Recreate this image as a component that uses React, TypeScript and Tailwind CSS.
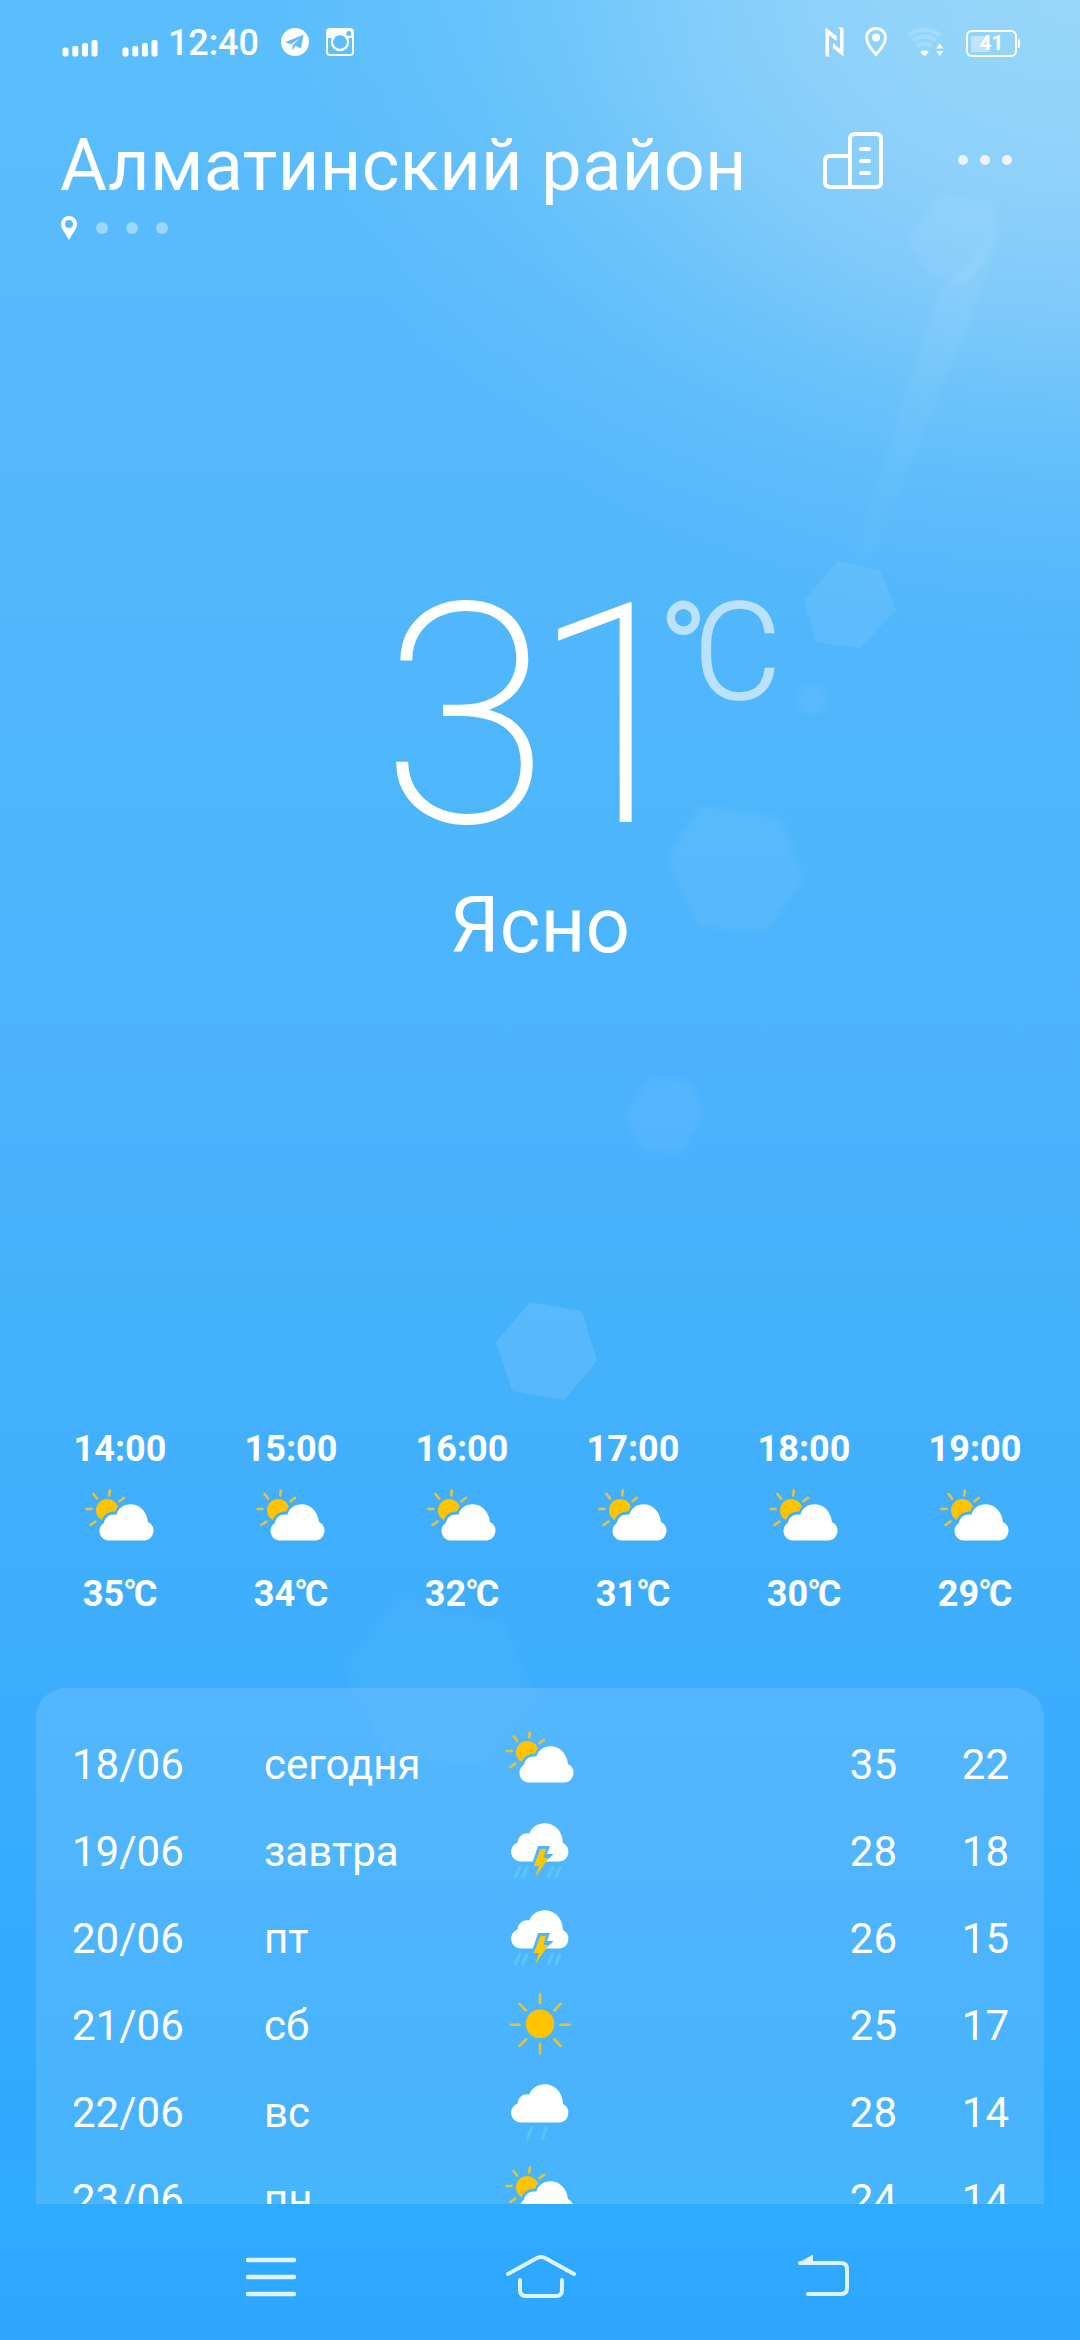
import React from "react";

function PartlyCloudy({ className }: { className: string }) {
  return (
    <svg viewBox="0 0 70 52" className={className} fill="none">
      <g stroke="#e8c234" strokeWidth="2.6" strokeLinecap="round">
        <path d="M1.5 20 H6.5M8.5 5 L12 9.5M24.8 1.5 L24.2 6.5M39 8.8 L34.5 12.2M5.5 36 L10.5 32.5" />
      </g>
      <path
        d="M16.5 31 A11.3 11.3 0 1 1 33 17.8 Q31 19.5 30.5 22.2 Q20 22.5 16.5 31Z"
        fill="#ffc300"
      />
      <path
        d="M23 51.5 A9.6 9.6 0 0 1 18.8 34 C20 27.5 25 24.5 31.5 25.6 C34.5 11.5 60 10 63 33 A9.8 9.8 0 0 1 60 51.5Z"
        fill="#fff"
      />
    </svg>
  );
}

function Cloud() {
  return (
    <path
      d="M16 47 A9.8 9.8 0 0 1 12.5 28 C13.500 21.500 18 18 24.400 19 C29 4 57 4 58 28.500 A9.800 9.800 0 0 1 54.500 47Z"
      fill="#fff"
    />
  );
}

function Storm({ className }: { className: string }) {
  return (
    <svg viewBox="0 1.5 70 70" className={className} fill="none">
      <Cloud />
      <path
        d="M10.500 62 l4 -9 M18 62 l4 -9 M43.500 62 l4 -9 M51 62 l4 -9"
        stroke="#5ac8fa"
        strokeOpacity="0.800"
        strokeWidth="3.400"
        strokeLinecap="round"
      />
      <path d="M33 31.500 H45 L42 39.500 H48.500 L40 48 H27.500Z" fill="#50b5fb" />
      <path d="M35.500 34.500 H41 L38.500 43.500 H43.500 L30 63 L34 51.500 H28.800Z" fill="#fdc900" />
    </svg>
  );
}

function Rain({ className }: { className: string }) {
  return (
    <svg viewBox="0 1.5 70 70" className={className} fill="none">
      <Cloud />
      <path
        d="M22.500 63 l4 -10.500 M37.500 63 l4 -10.500"
        stroke="#5ac8fa"
        strokeOpacity="0.800"
        strokeWidth="3.400"
        strokeLinecap="round"
      />
    </svg>
  );
}

function Sun({ className }: { className: string }) {
  return (
    <svg viewBox="0 1.2 70 70" className={className} fill="none">
      <circle cx="35" cy="35" r="14.300" fill="#ffc300" />
      <path
        d="M35 5.500 V14.500 M35 55 V64.500 M6 36 H14.500 M55.500 36 H64.500 M14.500 15 L21 21.500 M55.500 15 L49.500 21.500 M14.500 57 L21 50.500 M55.500 57 L49.500 50.500"
        stroke="#ebc033"
        strokeWidth="2.600"
        strokeLinecap="round"
      />
    </svg>
  );
}

function Signal() {
  return (
    <svg viewBox="0 0 36 17" className="h-[17px] w-[36px]" fill="#fff">
      <rect x="0.500" y="7.500" width="6" height="9" rx="2" />
      <rect x="10.300" y="6" width="6" height="10.500" rx="2" />
      <rect x="20" y="3" width="6" height="13.500" rx="2" />
      <rect x="29.500" y="0" width="6" height="16.500" rx="2" />
    </svg>
  );
}

function StatusBar() {
  return (
    <div className="flex h-[86px] items-start pl-[62px] pr-[60px]">
      <div className="mt-[40px] flex gap-[24px]">
        <Signal />
        <Signal />
      </div>
      <span className="ml-[10px] mt-[22px] text-[36px] font-medium leading-[42px] tracking-[-0.1px]">12:40</span>
      <svg viewBox="0 0 28 28" className="ml-[22px] mt-[28px] size-[28px]">
        <circle cx="14" cy="14" r="14" fill="#fff" />
        <path d="M4 14.300 L22.500 6.800 L20 20.500 L14.500 17.800 L11.800 21.300 L10.200 16.300Z" fill="#5dbcfb" />
        <path d="M20.500 8.800 L10.200 16.300 L11.500 21 L12.600 17.300Z" fill="#fff" />
        <path d="M20.500 8.800 L12.300 17 L11.800 21.300" fill="none" stroke="#5dbcfb" strokeWidth="1" />
      </svg>
      <svg viewBox="0 0 28 28" className="ml-[17px] mt-[28px] size-[28px]" fill="none">
        <rect x="1" y="1" width="26" height="26" rx="3" stroke="#fff" strokeWidth="2" />
        <path d="M1 2 H27 V10 H22 A9.200 9.200 0 0 0 6 10 H1Z" fill="#fff" />
        <circle cx="14" cy="14" r="8" stroke="#fff" strokeWidth="2.400" />
        <circle cx="14" cy="14" r="6.500" fill="#5dbcfb" />
        <rect x="20.500" y="3.300" width="4.500" height="4.500" rx="0.800" fill="#5dbcfb" />
      </svg>
      <div className="ml-auto flex">
        <svg viewBox="0 0 19 30" className="mt-[27px] h-[30px] w-[19px]" fill="#fff">
          <path d="M0.500 0.500 L11.500 9 V14 L4 8 V27 Q4 29.500 6 29.500 H1.500 Q0.500 29 0.500 27Z" />
          <path d="M18.500 29.500 L8 21 V16 L15 22 V3 Q15 0.500 13 0.500 H17.500 Q18.500 1 18.500 3Z" />
        </svg>
        <svg viewBox="0 0 22 30" className="ml-[21px] mt-[27px] h-[30px] w-[22px]">
          <path
            d="M11 1.500 C5.500 1.500 1.500 5.500 1.500 10.700 C1.500 17 7.500 23.500 11 27.500 C14.500 23.500 20.500 17 20.500 10.700 C20.500 5.500 16.500 1.500 11 1.500Z"
            fill="none"
            stroke="#fff"
            strokeWidth="2.800"
          />
          <circle cx="11" cy="10.500" r="4" fill="#fff" />
        </svg>
        <svg viewBox="0 0 36 30" className="ml-[21px] mt-[27px] h-[30px] w-[36px]" fill="none">
          <g stroke="#fff" strokeOpacity="0.170" strokeWidth="4.400">
            <path d="M1 8.500 C9 1 24 1 32 8.500" />
            <path d="M5.500 14 C11 8 22 8 27.500 14" />
            <path d="M9.500 19.500 C13 15.500 20 15.500 23.500 19.500" />
          </g>
          <path d="M12.200 25 Q16.500 21.500 20.800 25 L17.500 28.500 Q16.500 29 15.500 28.500Z" fill="#fff" />
          <path d="M28.200 21.500 L31.700 16.500 L35.200 21.500Z M28.200 24 H35.200 L31.700 29Z" fill="#fff" />
        </svg>
        <div className="ml-[22px] mt-[30px] flex items-center">
          <div className="relative flex h-[27px] w-[51px] items-center justify-center rounded-[6px] border-2 border-white">
            <div className="absolute left-[3px] top-[4px] h-[16px] w-[17px] bg-white/40" />
            <span className="relative text-[21px] font-bold leading-none">41</span>
          </div>
          <div className="ml-px h-[9px] w-[2px] rounded-r bg-white" />
        </div>
      </div>
    </div>
  );
}

function Header() {
  return (
    <div className="flex h-[164px] items-start pl-[60px] pr-[68px]">
      <div>
        <h1 className="mt-[38px] whitespace-nowrap text-[72px] font-normal leading-[84px] tracking-[0.4px]">Алматинский район</h1>
        <div className="mt-[8px] flex items-center">
          <svg viewBox="0 0 18 24" className="h-[24px] w-[18px]">
            <path
              d="M9 0 A8 8 0 0 0 1 8 C1 13 6 18 9 24 C12 18 17 13 17 8 A8 8 0 0 0 9 0Z M9 4 a4 4 0 1 1 0 8 a4 4 0 1 1 0 -8Z"
              fill="#fff"
              fillRule="evenodd"
            />
          </svg>
          <div className="ml-[18px] flex gap-[18px]">
            <i className="size-[12px] rounded-full bg-white/40" />
            <i className="size-[12px] rounded-full bg-white/40" />
            <i className="size-[12px] rounded-full bg-white/40" />
          </div>
        </div>
      </div>
      <div className="ml-auto mt-[46px] flex items-center">
        <svg viewBox="0 0 60 57" className="h-[57px] w-[60px]" fill="none" stroke="#fff" strokeWidth="4" strokeLinecap="round" strokeLinejoin="round">
          <path d="M27 55 V7 Q27 2 32 2 H53 Q58 2 58 7 V50 Q58 55 53 55 H7 Q2 55 2 50 V29 Q2 24 7 24 H27" />
          <path d="M38 17 H46 M38 29 H46 M38 41 H46" />
        </svg>
        <div className="mb-px ml-[75px] flex gap-[12px]">
          <i className="size-[10px] rounded-full bg-[#f0f3f5]" />
          <i className="size-[10px] rounded-full bg-[#f0f3f5]" />
          <i className="size-[10px] rounded-full bg-[#f0f3f5]" />
        </div>
      </div>
    </div>
  );
}

const hours = [
  ["14:00", "35"],
  ["15:00", "34"],
  ["16:00", "32"],
  ["17:00", "31"],
  ["18:00", "30"],
  ["19:00", "29"],
];

const days = [
  { date: "18/06", name: "сегодня", Icon: PartlyCloudy, size: "h-[52px] w-[70px] mb-[14px]", hi: 35, lo: 22 },
  { date: "19/06", name: "завтра", Icon: Storm, size: "size-[70px]", hi: 28, lo: 18 },
  { date: "20/06", name: "пт", Icon: Storm, size: "size-[70px]", hi: 26, lo: 15 },
  { date: "21/06", name: "сб", Icon: Sun, size: "size-[70px]", hi: 25, lo: 17 },
  { date: "22/06", name: "вс", Icon: Rain, size: "size-[70px]", hi: 28, lo: 14 },
  { date: "23/06", name: "пн", Icon: PartlyCloudy, size: "h-[52px] w-[70px] mb-[14px]", hi: 24, lo: 14 },
];

function Sky() {
  return (
    <svg viewBox="0 0 1080 2340" className="absolute inset-0 h-full w-full">
      <defs>
        <linearGradient id="sky" x1="0" y1="0" x2="0" y2="1">
          <stop offset="0" stopColor="#5bbefc" />
          <stop offset="0.12" stopColor="#58bafb" />
          <stop offset="0.25" stopColor="#52b7fb" />
          <stop offset="0.36" stopColor="#4db6fb" />
          <stop offset="0.46" stopColor="#4cb2fe" />
          <stop offset="0.56" stopColor="#44b1fb" />
          <stop offset="0.71" stopColor="#3dadfd" />
          <stop offset="0.9" stopColor="#30a9fd" />
          <stop offset="0.95" stopColor="#2eabff" />
          <stop offset="1" stopColor="#2fa5fe" />
        </linearGradient>
        <radialGradient id="glow" gradientUnits="userSpaceOnUse" cx="0" cy="0" r="1" gradientTransform="translate(1080 0) scale(800 640)">
          <stop offset="0" stopColor="#f4fbf6" stopOpacity="0.400" />
          <stop offset="0.3" stopColor="#f4fbf6" stopOpacity="0.340" />
          <stop offset="0.48" stopColor="#f4fbf6" stopOpacity="0.250" />
          <stop offset="0.64" stopColor="#f4fbf6" stopOpacity="0.140" />
          <stop offset="0.8" stopColor="#f4fbf6" stopOpacity="0.060" />
          <stop offset="1" stopColor="#f4fbf6" stopOpacity="0" />
        </radialGradient>
        <linearGradient id="ray" gradientUnits="userSpaceOnUse" x1="1000" y1="200" x2="860" y2="570">
          <stop offset="0" stopColor="#fff" stopOpacity="0.070" />
          <stop offset="1" stopColor="#fff" stopOpacity="0.020" />
        </linearGradient>
        <filter id="soft">
          <feGaussianBlur stdDeviation="3" />
        </filter>
      </defs>
      <rect width="1080" height="2340" fill="url(#sky)" />
      <rect width="1080" height="800" fill="url(#glow)" />
      <g fill="#fff" filter="url(#soft)">
        <path d="M940 290 L998 235 L970 320 L870 560 L852 560Z" fill="url(#ray)" />
        <path d="M940 193 L990 203 L998 235 L965 285 L928 276 L908 240Z" fillOpacity="0.060" />
        <path d="M700 805 L780 818 L803 880 L765 933 L698 925 L668 860Z" fillOpacity="0.060" />
        <path d="M650 1076 L692 1082 L704 1115 L682 1152 L642 1150 L625 1115Z" fillOpacity="0.050" />
        <circle cx="812" cy="700" r="15" fillOpacity="0.050" />
        <path d="M400 1598 L505 1625 L538 1700 L480 1765 L385 1755 L344 1665Z" fillOpacity="0.030" />
      </g>
      <path d="M838 561 L880 570 L896 610 L860 648 L816 642 L804 600Z" fill="#fff" fillOpacity="0.070" />
      <path d="M530 1302 L582 1311 L597 1361 L564 1400 L512 1391 L496 1342Z" fill="#fff" fillOpacity="0.110" />
    </svg>
  );
}

export default function App() {
  return (
    <div className="relative h-[2340px] w-[1080px] overflow-hidden bg-[#44b1fb] font-['Roboto',sans-serif] text-white">
      <Sky />
      <div className="relative flex h-full flex-col">
        <StatusBar />
        <Header />

        <div className="h-[1174px]">
          <div className="flex items-start pl-[381px] pt-[316px]">
            <span className="text-[308px] font-extralight leading-[301px] tracking-[-20px]">31</span>
            <span className="ml-[-22px] mt-[7px] text-[135px] font-light leading-[160px] text-[#bae2fc]">
              <span className="font-normal tracking-[-15px]">°</span>
              <span className="[-webkit-text-stroke:1.6px_#bae2fc]">C</span>
            </span>
          </div>
          <div className="mt-[13px] text-center text-[78px] leading-[92px]">Ясно</div>
        </div>

        <div className="flex h-[264px] pl-[34.5px]">
          {hours.map(([time, temp]) => (
            <div key={time} className="flex w-[171px] shrink-0 flex-col items-center text-[36px] font-bold leading-[42px]">
              <span className="mt-[4px]">{time}</span>
              <PartlyCloudy className="mt-[19px] h-[52px] w-[70px]" />
              <span className="mt-[32px] flex">
                {temp}
                <span className="ml-[-1px] tracking-[-3.5px]">°</span>C
              </span>
            </div>
          ))}
        </div>

        <div className="mx-[36px] h-[516px] overflow-hidden rounded-t-[30px] bg-white/12 pt-[32px]">
          {days.map(({ date, name, Icon, size, hi, lo }) => (
            <div key={date} className="flex h-[87px] items-center pl-[36px] pr-[35px] pt-[2px] text-[42px]">
              <span className="w-[192px]">{date}</span>
              <span className="w-[241px]">{name}</span>
              <span className="mb-[2px] flex h-[70px] w-[70px] items-center">
                <Icon className={size} />
              </span>
              <span className="ml-auto">{hi}</span>
              <span className="w-[112px] text-right">{lo}</span>
            </div>
          ))}
        </div>

        <div className="flex h-[136px] items-start pl-[246px] text-[#dff3ff]">
          <svg viewBox="0 0 50 46" className="mt-[51px] h-[46px] w-[50px]" fill="none" stroke="currentColor" strokeWidth="4.5" strokeLinecap="round">
            <path d="M2 5 H48 M2 22 H48 M2 39 H48" />
          </svg>
          <svg viewBox="0 0 70 46" className="ml-[210px] mt-[50px] h-[46px] w-[70px]" fill="none" stroke="currentColor" strokeWidth="4" strokeLinecap="round" strokeLinejoin="round">
            <path d="M2 20 L30 4.500 Q35 1.500 40 4.500 L68 20" />
            <path d="M14 26 V36 Q14 42 20 42 H50 Q56 42 56 36 V26" />
          </svg>
          <svg viewBox="0 0 52 46" className="ml-[222px] mt-[50px] h-[46px] w-[52px]" fill="none" stroke="currentColor" strokeWidth="4" strokeLinecap="round" strokeLinejoin="round">
            <path d="M2 9 H43 Q49 9 49 15 V34 Q49 40 43 40 H10" />
            <path d="M0 9 L15 0.500 V9Z" fill="currentColor" stroke="none" />
          </svg>
        </div>
      </div>
    </div>
  );
}
